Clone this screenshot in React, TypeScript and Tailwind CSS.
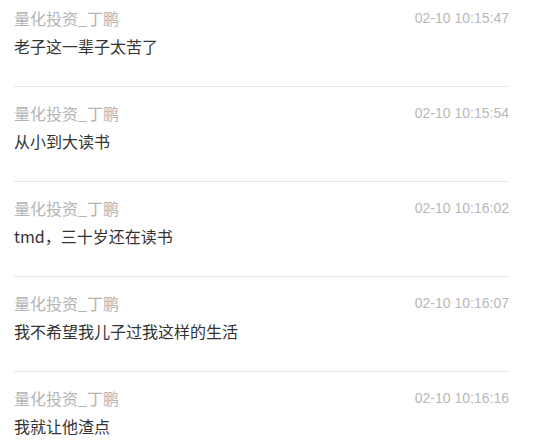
import React from 'react';

const messages = [
  { name: '量化投资_丁鹏', time: '02-10 10:15:47', text: '老子这一辈子太苦了' },
  { name: '量化投资_丁鹏', time: '02-10 10:15:54', text: '从小到大读书' },
  { name: '量化投资_丁鹏', time: '02-10 10:16:02', text: 'tmd，三十岁还在读书' },
  { name: '量化投资_丁鹏', time: '02-10 10:16:07', text: '我不希望我儿子过我这样的生活' },
  { name: '量化投资_丁鹏', time: '02-10 10:16:16', text: '我就让他渣点' },
];

export default function App() {
  return (
    <div className="h-[443px] overflow-hidden bg-white pl-[14px] font-['Noto_Sans_CJK_SC',sans-serif]">
      <div className="w-[495px] flex flex-col">
        {messages.map((m, i) => {
          const last = i === messages.length - 1;
          return (
            <div
              key={i}
              className={`${i === 0 ? 'pt-[6px]' : 'pt-[14px]'} ${last ? 'pb-0' : 'pb-[28px] border-b border-[#e6e6e6]'}`}
            >
              <div className="flex items-center justify-between h-6">
                <span className="text-[16px] text-[#b4b4b4] leading-6">{m.name}</span>
                <span className="text-[14px] text-[#b8b8b8] leading-6 font-['Liberation_Sans',sans-serif]">{m.time}</span>
              </div>
              <div className="mt-1 text-[16px] text-[#333] leading-6">{m.text}</div>
            </div>
          );
        })}
      </div>
    </div>
  );
}
